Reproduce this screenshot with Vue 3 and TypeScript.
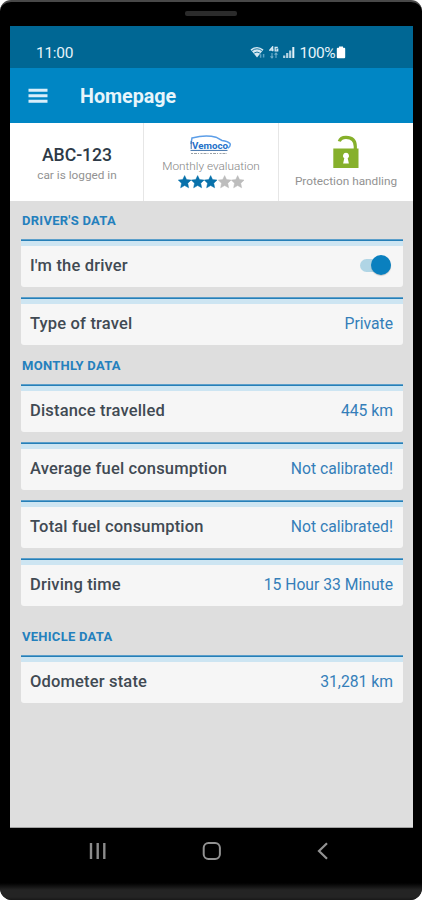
<script setup lang="ts">
interface Row {
  label: string
  value?: string
  toggle?: boolean
}
interface Section {
  id: string
  title: string
  rows: Row[]
}

const sections: Section[] = [
  {
    id: 'driver',
    title: "DRIVER'S DATA",
    rows: [
      { label: "I'm the driver", toggle: true },
      { label: 'Type of travel', value: 'Private' },
    ],
  },
  {
    id: 'monthly',
    title: 'MONTHLY DATA',
    rows: [
      { label: 'Distance travelled', value: '445 km' },
      { label: 'Average fuel consumption', value: 'Not calibrated!' },
      { label: 'Total fuel consumption', value: 'Not calibrated!' },
      { label: 'Driving time', value: '15 Hour 33 Minute' },
    ],
  },
  {
    id: 'vehicle',
    title: 'VEHICLE DATA',
    rows: [{ label: 'Odometer state', value: '31,281 km' }],
  },
]
const rating = 3
</script>

<template>
  <div class="phone">
    <div class="bezel-top"><span class="speaker"></span></div>
    <div class="screen">
      <div class="status">
        <span class="clock">11:00</span>
        <span class="indicators">
          <svg class="wifi" width="16" height="13" viewBox="0 0 16 13">
            <path d="M0.5 3.6 Q7 -1.6 13.5 3.6 L7 11.5 Z" fill="#d5e8f2" />
            <path d="M2.2 4.6 Q7 1 11.8 4.6 M4.2 7 Q7 5 9.8 7" fill="none" stroke="#006794" stroke-width="0.9" />
            <path d="M10.6 8.2v3.6M13.6 8v3.6" stroke="#5ba3c5" stroke-width="1.5" />
          </svg>
          <svg class="net" width="10" height="13" viewBox="0 0 10 13">
            <path d="M3.6 5.3V.8L.8 4h3.8M8.8 1.3H6.2v3.5h2.5V3.2H7.3" fill="none" stroke="#d5e8f2" stroke-width="1.3" />
            <path d="M3 7v5M1.5 10.3L3 12l1.2-1.5M7 12V7M5.6 8.6L7 7l1.4 1.6" fill="none" stroke="#71afcb" stroke-width="1.1" />
          </svg>
          <svg class="signal" width="12" height="13" viewBox="0 0 12 13">
            <path d="M1.2 12V9.5M4.2 12V7M7.2 12V4.5" stroke="#b5d4e3" stroke-width="2.2" />
            <path d="M10.3 12V1" stroke="#e6f3f9" stroke-width="2" />
          </svg>
          <span class="percent">100%</span>
          <svg class="battery" width="10" height="13" viewBox="0 0 10 13">
            <path d="M3 .5h4v1.2h1.2q1 0 1 1v8.6q0 1-1 1H1.8q-1 0-1-1V2.7q0-1 1-1H3z" fill="#fff" />
          </svg>
        </span>
      </div>
      <header class="appbar">
        <svg class="menu" width="20" height="16" viewBox="0 0 20 16">
          <path d="M.5 2.2h19M.5 7.7h19M.5 13.2h19" stroke="#d9eefa" stroke-width="3" />
        </svg>
        <h1>Homepage</h1>
      </header>
      <div class="tiles">
        <div class="tile plate">
          <strong>ABC-123</strong>
          <span class="caption logged">car is logged in</span>
        </div>
        <div class="tile evaluation">
          <svg class="logo" width="44" height="21" viewBox="0 0 44 21">
            <path d="M2 9L3 2.9Q17-.6 27 2.2l6 3.2q6 .8 8 3.2 1 2-2 4.6" fill="none" stroke="#5c9ee8" stroke-width="1.5" />
            <path d="M2.2 14V6M1.5 15.4h37" fill="none" stroke="#3d6fa8" stroke-width="1" />
            <text x="3" y="14" class="brand" textLength="36" lengthAdjust="spacingAndGlyphs">Vemoco</text>
            <path d="M2 18.5h36" stroke="#9ba1a6" stroke-width="1.2" stroke-dasharray="2 1 3 1 1 1.5" />
          </svg>
          <span class="caption score">Monthly evaluation</span>
          <span class="stars">
            <svg v-for="n in 5" :key="n" width="13.3" height="14" viewBox="0 0 13.3 14">
              <path
                d="M6.65.6l1.9 4 4.5.5-3.3 3.1.9 4.6-4-2.3-4 2.3.9-4.6L.25 5.1l4.5-.5z"
                :class="n <= rating ? 'on' : 'off'"
              />
            </svg>
          </span>
        </div>
        <div class="tile protection">
          <svg class="lock" width="26" height="34" viewBox="0 0 26 34">
            <path d="M6.3 6.4Q7.5 2.3 13 2.3q9.3 0 9.3 9.2V15" fill="none" stroke="#86b02b" stroke-width="3.2" />
            <path d="M.3 13.5h25.2V33H.3z" fill="#86b02b" />
            <path d="M13 17.8a3 3 0 0 1 1.7 5.5l1.2 5.2h-5.8l1.2-5.2A3 3 0 0 1 13 17.8z" fill="#fff" />
          </svg>
          <span class="caption handling">Protection handling</span>
        </div>
      </div>
      <main>
        <section v-for="s in sections" :key="s.id" :class="s.id">
          <h2>{{ s.title }}</h2>
          <div class="rows">
            <div v-for="r in s.rows" :key="r.label" class="row">
              <span class="label">{{ r.label }}</span>
              <span v-if="r.toggle" class="switch"><span class="knob"></span></span>
              <span v-else class="value">{{ r.value }}</span>
            </div>
          </div>
        </section>
      </main>
    </div>
    <nav class="navbar">
      <svg width="18" height="18" viewBox="0 0 18 18">
        <path d="M2 1v16M8.7 1v16M15.3 1v16" stroke="#8b8b8b" stroke-width="2.4" />
      </svg>
      <svg width="20" height="20" viewBox="0 0 20 20">
        <rect x="1.7" y="2" width="16.2" height="16" rx="4.8" fill="none" stroke="#929292" stroke-width="2" />
      </svg>
      <svg width="12" height="18" viewBox="0 0 12 18">
        <path d="M10 1.2L2 9l8 7.8" fill="none" stroke="#929292" stroke-width="2.2" />
      </svg>
    </nav>
    <div class="chin"></div>
  </div>
</template>

<style>
body {
  margin: 0;
  background: #fff;
}
</style>

<style scoped>
.phone {
  box-sizing: border-box;
  width: 422px;
  height: 900px;
  background: #000;
  border-top: 2px solid #484848;
  border-radius: 11px 11px 12px 12px;
  overflow: hidden;
  display: flex;
  flex-direction: column;
  font-family: Roboto, sans-serif;
  white-space: nowrap;
}
.bezel-top {
  height: 24px;
  display: flex;
  justify-content: center;
}
.speaker {
  width: 52px;
  height: 5px;
  margin-top: 9px;
  background: #2b2b2b;
  border-radius: 2px;
}
.screen {
  box-sizing: border-box;
  width: 403px;
  height: 802px;
  margin-left: 10px;
  background: #dedede;
  border-bottom: 1px solid #a2a2a2;
  display: flex;
  flex-direction: column;
}
.status {
  height: 42px;
  background: #006794;
  display: flex;
  justify-content: space-between;
  box-sizing: border-box;
  padding: 16px 67px 0 26px;
  color: #e6f3f9;
  font-size: 15.5px;
  line-height: 20px;
}
.clock {
  padding-top: 1px;
  letter-spacing: -0.3px;
}
.indicators {
  display: flex;
  align-items: flex-start;
}
.indicators svg {
  margin-top: 4px;
}
.net {
  margin-left: 3px;
}
.signal {
  margin-left: 4px;
}
.percent {
  padding-top: 1px;
  margin-left: 5px;
  letter-spacing: -0.5px;
}
.battery {
  margin-left: 1px;
}
.appbar {
  height: 55px;
  background: #0086c4;
  display: flex;
  align-items: center;
  padding-left: 18px;
}
.menu {
  margin-right: 32px;
}
h1 {
  margin: 3px 0 0;
  font-size: 19.7px;
  line-height: 24px;
  font-weight: 700;
  color: #e8f5fb;
}
.tiles {
  height: 78px;
  display: grid;
  grid-template-columns: 133px 135px 135px;
  background: #fff;
}
.tile {
  display: flex;
  flex-direction: column;
  align-items: center;
  box-sizing: border-box;
}
.tile + .tile {
  border-left: 1px solid #e6e6e6;
}
.plate strong {
  margin-top: 22px;
  padding-left: 1px;
  font-size: 17.6px;
  line-height: 20px;
  font-weight: 500;
  color: #2d3a47;
}
.caption {
  font-size: 11.8px;
  line-height: 14px;
  color: #929292;
}
.logged {
  margin-top: 3px;
  padding-left: 1px;
}
.logo {
  margin-top: 12px;
}
.brand {
  font-family: Roboto, sans-serif;
  font-size: 9.5px;
  font-weight: 700;
  fill: #2370c9;
}
.score {
  margin-top: 3px;
  font-weight: 300;
  color: #858585;
}
.stars {
  display: flex;
  margin-top: 2px;
}
.on {
  fill: #0871ab;
  stroke: #0871ab;
  stroke-width: 0.5;
}
.off {
  fill: #bdbdbd;
  stroke: #bdbdbd;
  stroke-width: 0.5;
}
.lock {
  margin-top: 12px;
}
.handling {
  margin-top: 5px;
}
h2 {
  margin: 0;
  padding-left: 1.5px;
  font-size: 13px;
  letter-spacing: 0.27px;
  line-height: 16px;
  font-weight: 700;
  color: #2480bd;
}
main {
  padding: 12px 10.5px 0;
}
.rows {
  display: grid;
  gap: 10px;
  margin-top: 10px;
}
.monthly {
  margin-top: 13px;
}
.vehicle {
  margin-top: 23px;
}
.row {
  box-sizing: border-box;
  height: 48px;
  padding: 4px 9.5px 0;
  display: flex;
  align-items: center;
  justify-content: space-between;
  border-radius: 0 0 3px 3px;
  background: linear-gradient(#5c9fca 0 1px, #267fb7 1px 2px, #cde5f2 2px 7px, #f6f6f6 7px);
}
.label {
  font-size: 16.5px;
  letter-spacing: 0.17px;
  font-weight: 500;
  color: #414a53;
}
.value {
  font-size: 15.7px;
  color: #347eb9;
}
.switch {
  box-sizing: border-box;
  width: 31px;
  height: 13px;
  margin-right: 2px;
  border-radius: 7px;
  background: #b0d5e5;
  display: flex;
  justify-content: flex-end;
  align-items: center;
}
.knob {
  width: 20px;
  height: 20px;
  flex: none;
  border-radius: 50%;
  background: #0a80bf;
  box-shadow: 0 1px 1px rgba(0, 0, 0, 0.18);
}
.navbar {
  height: 45px;
  box-sizing: border-box;
  padding: 0 93px 0 89px;
  display: flex;
  align-items: center;
  justify-content: space-between;
}
.chin {
  flex: 1;
  margin-top: 10px;
  background: linear-gradient(#000, #242424 7px, #242424 14px, #181818);
}
</style>
